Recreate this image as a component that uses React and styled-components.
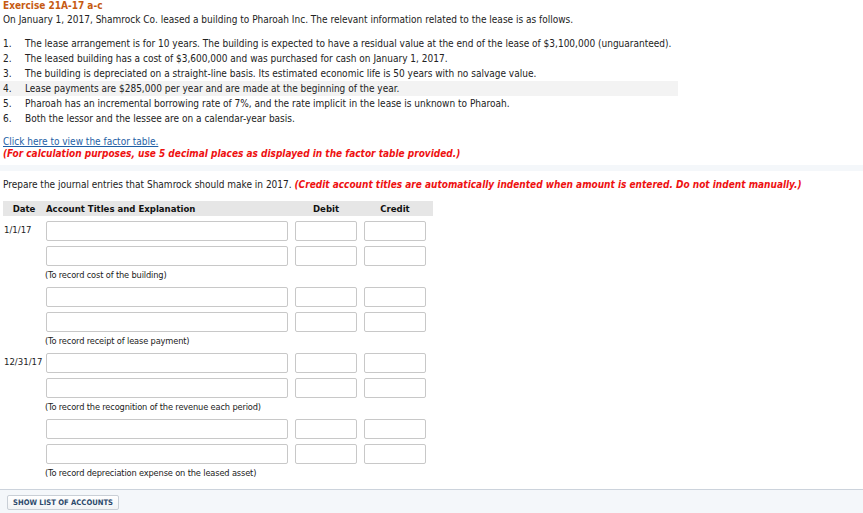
import React from 'react';
import styled, { createGlobalStyle } from 'styled-components';

const GlobalStyle = createGlobalStyle`
  html, body {
    margin: 0;
    padding: 0;
    background: #fff;
  }
  body {
    font-family: "DejaVu Sans Condensed", "DejaVu Sans", Tahoma, sans-serif;
    font-size: 10px;
    color: #222;
  }
`;

const Page = styled.div`
  width: 863px;
  min-height: 513px;
  display: flex;
  flex-direction: column;
`;

const Top = styled.div`
  padding: 0 3px;
`;

const Title = styled.div`
  color: #c65a12;
  font-weight: bold;
  font-size: 10px;
  line-height: 11px;
  margin-top: 0;
`;

const Intro = styled.p`
  margin: 2px 0 0;
  line-height: 14px;
`;

const List = styled.ol`
  list-style: none;
  margin: 9px 0 0;
  padding: 0;
  width: 675px;
`;

const Item = styled.li`
  display: flex;
  line-height: 15px;
  background: ${(p) => (p.$shade ? '#f3f3f3' : 'transparent')};
  margin-left: -3px;
  padding-left: 3px;
`;

const Num = styled.span`
  width: 22px;
  flex: none;
`;

const FactorLink = styled.a`
  display: block;
  margin-top: 10px;
  color: #1f5fa6;
  text-decoration: underline;
  line-height: 12px;
`;

const Warning = styled.span`
  display: ${(p) => (p.$block ? 'block' : 'inline')};
  color: #ee1111;
  font-weight: bold;
  font-style: italic;
  line-height: 12px;
`;

const Band = styled.div`
  height: 6px;
  background: #f4f7fa;
  margin-top: 5px;
`;

const Prompt = styled.p`
  margin: 7px 0 0;
  padding: 0 3px;
  line-height: 14px;
`;

const Journal = styled.div`
  margin: 9px 0 0 3px;
  width: 430px;
`;

const Grid = styled.div`
  display: grid;
  grid-template-columns: 36px 242px 62px 62px;
  column-gap: 7px;
  padding-right: 7px;
`;

const Header = styled(Grid)`
  background: #e6e6e6;
  height: 15px;
  align-items: center;
  font-weight: bold;
  font-size: 9.5px;
  color: #111;
  margin-bottom: 5px;
`;

const HeadCell = styled.div`
  text-align: ${(p) => p.$align || 'left'};
  padding-left: ${(p) => p.$pad || 0}px;
  white-space: nowrap;
`;

const Group = styled.div`
  margin-bottom: 5px;
`;

const Row = styled(Grid)`
  margin-bottom: 5px;
  align-items: start;
`;

const DateCell = styled.div`
  padding: 3px 0 0 1px;
  font-size: 9.5px;
  line-height: 12px;
  white-space: nowrap;
`;

const Field = styled.input`
  box-sizing: border-box;
  width: 100%;
  height: 20px;
  border: 1px solid #c8c8c8;
  border-radius: 2px;
  background: #fff;
  margin: 0;
  padding: 0 4px;
  font: inherit;
`;

const Note = styled.div`
  margin: -3px 0 0 42px;
  line-height: 14px;
  font-size: 9.2px;
  letter-spacing: -0.15px;
`;

const Bottom = styled.div`
  margin-top: 4px;
  flex: 1;
  border-top: 1px solid #ccd3dc;
  background: #f4f7fa;
  padding: 5px 7px;
`;

const AccountsButton = styled.button`
  height: 15px;
  padding: 0 5px;
  border: 1px solid #c9cfd6;
  border-radius: 2px;
  background: linear-gradient(#ffffff, #f1f3f5);
  color: #2d4a6c;
  font-family: "DejaVu Sans Condensed", "DejaVu Sans", sans-serif;
  font-weight: bold;
  font-size: 7.6px;
  line-height: 13px;
`;

const facts = [
  'The lease arrangement is for 10 years. The building is expected to have a residual value at the end of the lease of $3,100,000 (unguaranteed).',
  'The leased building has a cost of $3,600,000 and was purchased for cash on January 1, 2017.',
  'The building is depreciated on a straight-line basis. Its estimated economic life is 50 years with no salvage value.',
  'Lease payments are $285,000 per year and are made at the beginning of the year.',
  'Pharoah has an incremental borrowing rate of 7%, and the rate implicit in the lease is unknown to Pharoah.',
  'Both the lessor and the lessee are on a calendar-year basis.',
];

const entries = [
  { date: '1/1/17', note: '(To record cost of the building)' },
  { date: '', note: '(To record receipt of lease payment)' },
  { date: '12/31/17', note: '(To record the recognition of the revenue each period)' },
  { date: '', note: '(To record depreciation expense on the leased asset)' },
];

function EntryRow({ date }) {
  return (
    <Row>
      <DateCell>{date}</DateCell>
      <Field />
      <Field />
      <Field />
    </Row>
  );
}

export default function App() {
  return (
    <Page>
      <GlobalStyle />
      <Top>
        <Title>Exercise 21A-17 a-c</Title>
        <Intro>
          On January 1, 2017, Shamrock Co. leased a building to Pharoah Inc. The relevant information related to the lease is as follows.
        </Intro>
        <List>
          {facts.map((f, i) => (
            <Item key={i} $shade={i === 3}>
              <Num>{i + 1}.</Num>
              <span>{f}</span>
            </Item>
          ))}
        </List>
        <FactorLink href="#">Click here to view the factor table.</FactorLink>
        <Warning $block>(For calculation purposes, use 5 decimal places as displayed in the factor table provided.)</Warning>
      </Top>
      <Band />
      <Prompt>
        Prepare the journal entries that Shamrock should make in 2017.{' '}
        <Warning>(Credit account titles are automatically indented when amount is entered. Do not indent manually.)</Warning>
      </Prompt>
      <Journal>
        <Header>
          <HeadCell $align="center" $pad={6}>Date</HeadCell>
          <HeadCell>Account Titles and Explanation</HeadCell>
          <HeadCell $align="center">Debit</HeadCell>
          <HeadCell $align="center">Credit</HeadCell>
        </Header>
        {entries.map((e, i) => (
          <Group key={i}>
            <EntryRow date={e.date} />
            <EntryRow date="" />
            <Note>{e.note}</Note>
          </Group>
        ))}
      </Journal>
      <Bottom>
        <AccountsButton>SHOW LIST OF ACCOUNTS</AccountsButton>
      </Bottom>
    </Page>
  );
}
